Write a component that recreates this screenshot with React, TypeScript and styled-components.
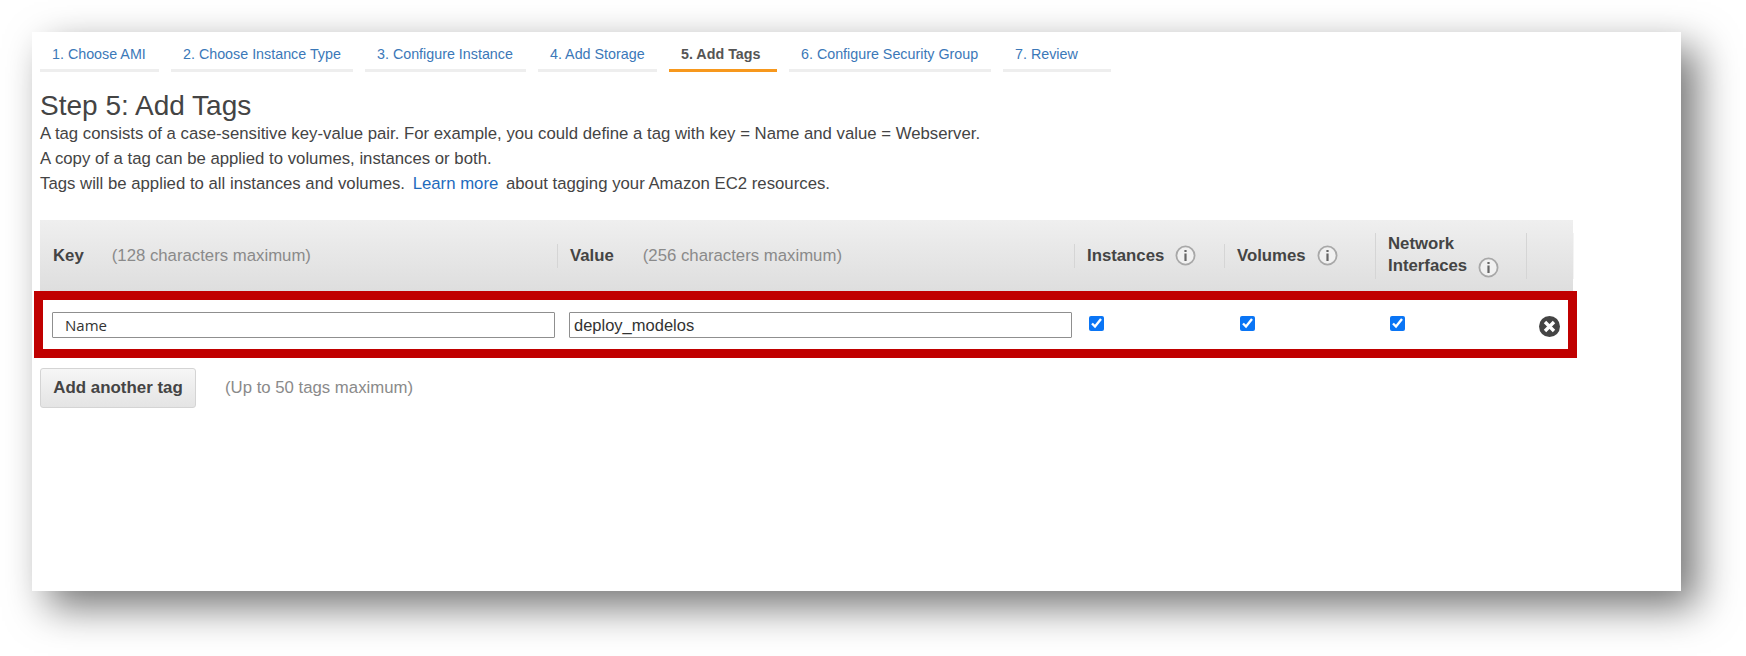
import styled, { createGlobalStyle } from "styled-components"

const GlobalStyle = createGlobalStyle`
  html, body {
    margin: 0;
    background: #fff;
    overflow: hidden;
  }
  body {
    font-family: "Liberation Sans", Arial, sans-serif;
    color: #444;
  }
`

const Page = styled.div`
  width: 1746px;
  height: 656px;
  padding: 32px 65px 65px 32px;
  box-sizing: border-box;
`

const Sheet = styled.div`
  height: 559px;
  background: #fff;
  padding: 0 108px 0 8px;
  box-shadow: 16px 16px 38px rgba(0, 0, 0, 0.54);
`

const Tabs = styled.nav`
  display: flex;
  gap: 12px;
  padding-top: 9px;
`

const Tab = styled.a<{ $active?: boolean; $width: number }>`
  width: ${(p) => p.$width}px;
  height: 31px;
  box-sizing: border-box;
  padding-left: 12px;
  line-height: 26px;
  font-size: 14.3px;
  font-weight: ${(p) => (p.$active ? "bold" : "normal")};
  color: ${(p) => (p.$active ? "#555" : "#3b78b8")};
  border-bottom: 3px solid ${(p) => (p.$active ? "#f7981d" : "#eee")};
`

const Title = styled.h1`
  margin: 18px 0 0;
  font-size: 28px;
  font-weight: normal;
  line-height: 32px;
  color: #444;
`

const Intro = styled.p`
  margin: -1px 0 0;
  font-size: 16.75px;
  line-height: 25px;
`

const Learn = styled.a`
  color: #1f6bbd;
  margin: 0 3px;
`

const Table = styled.div`
  margin-top: 24px;
`

const columns = "517px 517px 150px 151px 151px 47px"

const Head = styled.div`
  display: grid;
  grid-template-columns: ${columns};
  height: 71px;
  align-items: center;
  background: linear-gradient(#efefef, #dedede);
  font-size: 16.75px;
`

const HeadCell = styled.div<{ $tall?: boolean; $first?: boolean }>`
  display: flex;
  align-items: center;
  box-sizing: border-box;
  height: ${(p) => (p.$tall ? 46 : 24)}px;
  padding-left: ${(p) => (p.$first ? 13 : 12)}px;
  border-left: ${(p) => (p.$first ? "0" : "1px solid #d5d5d5")};
  box-shadow: ${(p) => (p.$first ? "none" : "1px 0 0 #f4f4f4")};
  font-weight: bold;
  color: #444;
`

const Hint = styled.span<{ $first?: boolean }>`
  margin-left: ${(p) => (p.$first ? 28 : 29)}px;
  font-weight: normal;
  color: #8a8a8a;
  white-space: nowrap;
`

const Multi = styled.div`
  line-height: 22px;
`

const InfoIcon = styled.svg`
  width: 21px;
  height: 21px;
  margin-left: 11px;
  vertical-align: middle;
  flex: none;
`

const Row = styled.div`
  position: relative;
  display: grid;
  grid-template-columns: ${columns};
  height: 67px;
`

const Highlight = styled.div`
  position: absolute;
  inset: 0 -4px 0 -6px;
  border: 9px solid #c00000;
  pointer-events: none;
`

const Cell = styled.div`
  padding: 21px 0 0 12px;
`

const CheckCell = styled.div<{ $indent: number }>`
  padding: 25px 0 0 ${(p) => p.$indent}px;
`

const TextInput = styled.input<{ $pasted?: boolean }>`
  display: block;
  width: 503px;
  height: 26px;
  box-sizing: border-box;
  padding: 0 ${(p) => (p.$pasted ? 12 : 4)}px;
  border: 1px solid #8f8f8f;
  border-radius: 1px;
  background: #fff;
  color: #333;
  font-family: ${(p) => (p.$pasted ? '"Open Sans"' : '"Liberation Sans"')}, sans-serif;
  font-size: ${(p) => (p.$pasted ? 15 : 16.5)}px;
  outline: none;
`

const Check = styled.input`
  display: block;
  width: 15px;
  height: 15px;
  margin: 0;
  accent-color: #0a75f5;
`

const DeleteCell = styled.div`
  padding: 25px 0 0 13px;
`

const DeleteIcon = styled.svg`
  display: block;
  width: 21px;
  height: 21px;
`

const Footer = styled.div`
  display: flex;
  align-items: center;
  margin-top: 10px;
`

const AddButton = styled.button`
  width: 156px;
  height: 40px;
  padding: 0;
  border: 1px solid #d4d4d4;
  border-radius: 3px;
  background: linear-gradient(#f6f6f6, #e4e4e4);
  color: #444;
  font-family: "Liberation Sans", sans-serif;
  font-size: 16.9px;
  font-weight: bold;
`

const Note = styled.span`
  margin-left: 29px;
  font-size: 16.75px;
  color: #8a8a8a;
`

const tabs = [
  { label: "1. Choose AMI", width: 119 },
  { label: "2. Choose Instance Type", width: 182 },
  { label: "3. Configure Instance", width: 161 },
  { label: "4. Add Storage", width: 119 },
  { label: "5. Add Tags", width: 108, active: true },
  { label: "6. Configure Security Group", width: 202 },
  { label: "7. Review", width: 108 },
]

function Info() {
  return (
    <InfoIcon viewBox="0 0 21 21">
      <circle cx="10.5" cy="10.5" r="9.1" fill="#f1f1f1" stroke="#a8a8a8" strokeWidth="1.8" />
      <rect x="9.4" y="8.5" width="2.2" height="7.5" fill="#666" />
      <rect x="9.4" y="5" width="2.2" height="2" fill="#666" />
    </InfoIcon>
  )
}

export default function App() {
  return (
    <Page>
      <GlobalStyle />
      <Sheet>
        <Tabs>
          {tabs.map((tab) => (
            <Tab key={tab.label} $active={tab.active} $width={tab.width}>
              {tab.label}
            </Tab>
          ))}
        </Tabs>
        <Title>Step 5: Add Tags</Title>
        <Intro>
          A tag consists of a case-sensitive key-value pair. For example, you could define a tag with key = Name and value = Webserver.
          <br />
          A copy of a tag can be applied to volumes, instances or both.
          <br />
          Tags will be applied to all instances and volumes. <Learn>Learn more</Learn> about tagging your Amazon EC2 resources.
        </Intro>
        <Table>
          <Head>
            <HeadCell $first>
              Key<Hint $first>(128 characters maximum)</Hint>
            </HeadCell>
            <HeadCell>
              Value<Hint>(256 characters maximum)</Hint>
            </HeadCell>
            <HeadCell>
              Instances
              <Info />
            </HeadCell>
            <HeadCell>
              Volumes
              <Info />
            </HeadCell>
            <HeadCell $tall>
              <Multi>
                Network
                <br />
                Interfaces
                <Info />
              </Multi>
            </HeadCell>
            <HeadCell $tall />
          </Head>
          <Row>
            <Cell>
              <TextInput $pasted defaultValue="Name" />
            </Cell>
            <Cell>
              <TextInput defaultValue="deploy_modelos" />
            </Cell>
            <CheckCell $indent={15}>
              <Check type="checkbox" defaultChecked />
            </CheckCell>
            <CheckCell $indent={16}>
              <Check type="checkbox" defaultChecked />
            </CheckCell>
            <CheckCell $indent={15}>
              <Check type="checkbox" defaultChecked />
            </CheckCell>
            <DeleteCell>
              <DeleteIcon viewBox="0 0 21 21">
                <circle cx="10.5" cy="10.5" r="10.5" fill="#444" />
                <path d="M6 6l9 9M15 6l-9 9" stroke="#fff" strokeWidth="3.4" />
              </DeleteIcon>
            </DeleteCell>
            <Highlight />
          </Row>
          <Footer>
            <AddButton>Add another tag</AddButton>
            <Note>(Up to 50 tags maximum)</Note>
          </Footer>
        </Table>
      </Sheet>
    </Page>
  )
}
